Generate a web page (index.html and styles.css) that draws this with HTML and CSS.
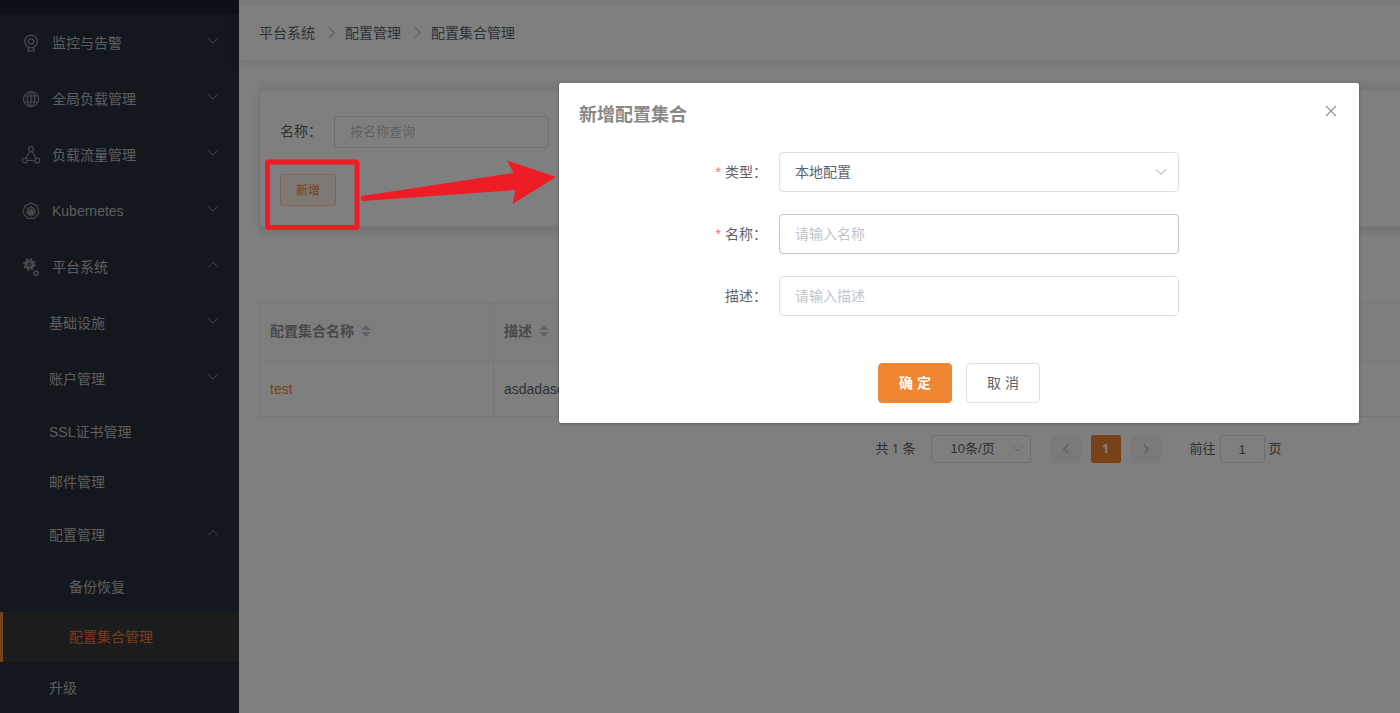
FILE: index.html
```html
<!DOCTYPE html>
<html lang="zh-CN">
<head>
    <meta charset="UTF-8">
    <meta name="viewport" content="width=device-width, initial-scale=1.0">
    <title>配置集合管理</title>
    <link rel="stylesheet" href="styles.css">
</head>
<body>
    <svg class="symbols">
        <symbol id="down" viewBox="0 0 12 12"><path d="M1.5 3.5 6 8l4.500-4.500"/></symbol>
        <symbol id="up" viewBox="0 0 12 12"><path d="M1.500 8 6 3.500 10.500 8"/></symbol>
        <symbol id="right" viewBox="0 0 12 12"><path d="M3.500 1 8.500 6l-5 5"/></symbol>
        <symbol id="left" viewBox="0 0 12 12"><path d="M8.500 1 3.500 6l5 5"/></symbol>
    </svg>
    <div class="layout">
        <aside class="sidebar">
            <div class="logo-bar"></div>
            <ul class="menu">
                <li class="submenu">
                    <svg class="menu-icon" viewBox="0 0 18 18"><circle cx="9" cy="7.500" r="6.300"/><circle cx="9" cy="7.500" r="2.700"/><path d="M6.800 13.500 6 16.500M11.200 13.500l.8 3M5 16.800h8"/></svg>
                    <span>监控与告警</span>
                    <svg class="arrow"><use href="#down"/></svg>
                </li>
                <li class="submenu">
                    <svg class="menu-icon" viewBox="0 0 18 18"><circle cx="9" cy="9" r="7.500"/><ellipse cx="9" cy="9" rx="3.700" ry="7.500"/><path d="M9 1.500v15M2.200 6h13.600M2.200 12h13.600"/></svg>
                    <span>全局负载管理</span>
                    <svg class="arrow"><use href="#down"/></svg>
                </li>
                <li class="submenu">
                    <svg class="menu-icon" viewBox="0 0 18 18"><circle cx="9" cy="3.200" r="2.500"/><circle cx="2.700" cy="14.500" r="2.400"/><circle cx="15.300" cy="14.500" r="2.400"/><path d="M7.900 5.500 3.900 12.300M10.100 5.500l4 6.800M5.200 14.500h7.600"/></svg>
                    <span>负载流量管理</span>
                    <svg class="arrow"><use href="#down"/></svg>
                </li>
                <li class="submenu">
                    <svg class="menu-icon" viewBox="0 0 18 18"><path d="M9 .9l6.300 3 1.700 6.900-4.400 5.600H5.400L1 10.800l1.700-6.900z"/><circle cx="9" cy="9" r="3.500"/><path d="M9 3.500v11M4.700 5.600l8.600 6.800M13.300 5.600l-8.600 6.800M3.600 10.200 9 9l5.400 1.200M6.600 14 9 9l2.400 5"/></svg>
                    <span class="latin">Kubernetes</span>
                    <svg class="arrow"><use href="#down"/></svg>
                </li>
                <li class="submenu">
                    <svg class="menu-icon" viewBox="0 0 18 18"><circle cx="7.400" cy="6.500" r="3.500" stroke-width="2.800"/><circle cx="7.400" cy="6.500" r="5.500" stroke-width="1.800" stroke-dasharray="2.160"/><circle class="dot" cx="7.400" cy="6.500" r=".9"/><circle cx="14" cy="15.200" r="1.900" stroke-width="1.400"/><circle cx="14" cy="15.200" r="2.800" stroke-width="1" stroke-dasharray="1.100"/></svg>
                    <span>平台系统</span>
                    <svg class="arrow"><use href="#up"/></svg>
                </li>
                <li class="submenu level-2"><span>基础设施</span><svg class="arrow"><use href="#down"/></svg></li>
                <li class="submenu level-2"><span>账户管理</span><svg class="arrow"><use href="#down"/></svg></li>
                <li class="menu-item level-2">SSL证书管理</li>
                <li class="menu-item level-2">邮件管理</li>
                <li class="submenu level-2"><span>配置管理</span><svg class="arrow"><use href="#up"/></svg></li>
                <li class="menu-item level-3">备份恢复</li>
                <li class="menu-item level-3 active">配置集合管理</li>
                <li class="menu-item level-2">升级</li>
            </ul>
        </aside>

        <main class="main">
            <nav class="breadcrumb">
                <span>平台系统</span>
                <svg class="separator"><use href="#right"/></svg>
                <span>配置管理</span>
                <svg class="separator"><use href="#right"/></svg>
                <span>配置集合管理</span>
            </nav>
            <section class="search">
                <div class="card">
                    <div class="search-row">
                        <label for="keyword">名称：</label>
                        <input class="input search-input" id="keyword" type="text" placeholder="按名称查询">
                    </div>
                    <button class="add-button" type="button">新增</button>
                </div>
            </section>
            <table class="table">
                <colgroup><col class="col-name"><col></colgroup>
                <thead>
                    <tr>
                        <th>配置集合名称<span class="sort"></span></th>
                        <th>描述<span class="sort"></span></th>
                    </tr>
                </thead>
                <tbody>
                    <tr>
                        <td><a class="link">test</a></td>
                        <td>asdadasd</td>
                    </tr>
                </tbody>
            </table>
            <div class="pagination">
                <span class="total">共 1 条</span>
                <div class="page-size"><span>10条/页</span><svg class="size-arrow"><use href="#down"/></svg></div>
                <button class="page" type="button"><svg><use href="#left"/></svg></button>
                <button class="page current" type="button">1</button>
                <button class="page" type="button"><svg><use href="#right"/></svg></button>
                <div class="jump"><span>前往</span><span class="jump-input">1</span><span>页</span></div>
            </div>
        </main>
    </div>

    <div class="mask">
        <div class="dialog">
            <div class="dialog-header">
                <h2>新增配置集合</h2>
                <svg class="close" viewBox="0 0 12 12"><path d="m1 1 10 10M11 1 1 11"/></svg>
            </div>
            <form class="form">
                <div class="form-item">
                    <label class="required">类型：</label>
                    <div class="input select"><span>本地配置</span><svg><use href="#down"/></svg></div>
                </div>
                <div class="form-item">
                    <label class="required" for="name">名称：</label>
                    <input class="input hovered" id="name" type="text" placeholder="请输入名称">
                </div>
                <div class="form-item">
                    <label for="desc">描述：</label>
                    <input class="input" id="desc" type="text" placeholder="请输入描述">
                </div>
            </form>
            <div class="dialog-footer">
                <button class="button primary" type="button">确 定</button>
                <button class="button" type="button">取 消</button>
            </div>
        </div>
    </div>

    <!-- callout from the add button to the dialog -->
    <svg class="callout" viewBox="0 0 300 80">
        <rect x="7.500" y="7" width="89.500" height="65.500" rx="1"/>
        <path d="M101 42.500q0-1.500 1-1.600L253.500 18 247 5.500 296 22l-43.500 27 3-14L103 46q-2 0-2-3.500z"/>
    </svg>
</body>
</html>
```
FILE: styles.css
```css
* {
    box-sizing: border-box;
}
html {
    overflow: hidden;
}
body {
    margin: 0;
    height: 713px;
    overflow: hidden;
    position: relative;
    font-family: "Liberation Sans", "Noto Sans CJK SC", sans-serif;
    font-size: 14px;
    color: #606266;
    background-color: #ffffff;
}
svg {
    fill: none;
    stroke: currentColor;
}
button, input {
    font-family: inherit;
}
.symbols {
    position: absolute;
    width: 0;
    height: 0;
}
.layout {
    display: flex;
    width: 1918px;
    height: 713px;
}

/* sidebar */
.sidebar {
    width: 239px;
    flex-shrink: 0;
    background-color: #26303c;
    color: #bbbbbb;
}
.logo-bar {
    height: 14px;
    background-color: #1b212d;
}
.menu {
    list-style: none;
    margin: 0;
    padding: 0;
}
.submenu {
    display: flex;
    align-items: center;
    height: 56px;
    padding: 0 20px 0 22px;
}
.submenu span {
    padding-bottom: 1px;
}
.submenu .latin {
    padding: 1px 0 0;
}
.menu-icon {
    width: 18px;
    height: 18px;
    margin: 2px 12px 0 0;
    color: #8c9095;
    stroke-width: 1.200;
    overflow: visible;
}
.dot {
    fill: currentColor;
    stroke: none;
}
.arrow {
    width: 12px;
    height: 12px;
    margin: 0 0 3px auto;
    color: #868a90;
}
.menu-item {
    height: 50px;
    line-height: 50px;
    padding-left: 49px;
}
.submenu.level-2 {
    padding-left: 49px;
}
.menu-item.level-2 {
    padding-top: 1px;
}
.menu-item.level-3 {
    padding-left: 69px;
}
.menu-item.active {
    padding-left: 66px;
    border-left: 3px solid #f08632;
    background-color: #37383a;
    color: #f07a32;
}

/* content */
.main {
    flex: 1;
    border-top: 5px solid #fafafa;
}
.breadcrumb {
    display: flex;
    align-items: center;
    height: 55px;
    padding-left: 20px;
    background-color: #ffffff;
    box-shadow: 0 2px 12px rgba(0, 0, 0, 0.1);
}
.breadcrumb span {
    padding-bottom: 2px;
}
.separator {
    width: 13px;
    height: 13px;
    margin: 0 7px 0 10px;
    color: #b4b8bf;
}
.search {
    margin: 20px 20px 0;
    height: 157px;
    padding: 10px 0;
    background-color: #f6f8fc;
}
.card {
    height: 137px;
    padding: 25px 20px;
    border: 1px solid #ebeef5;
    border-radius: 4px;
    background-color: #ffffff;
    box-shadow: 0 2px 12px rgba(0, 0, 0, 0.1);
}
.search-row {
    display: flex;
    align-items: center;
    height: 32px;
    margin-bottom: 26px;
}
.search-row label {
    width: 54px;
    padding-bottom: 5px;
}
.input {
    width: 400px;
    height: 40px;
    padding: 0 15px;
    border: 1px solid #dcdfe6;
    border-radius: 4px;
    background-color: #ffffff;
    color: #606266;
    font-size: 14px;
}
.input::placeholder {
    color: #c0c4cc;
}
.search-input {
    width: 215px;
    height: 32px;
    padding-bottom: 2px;
    font-size: 13px;
}
.add-button {
    display: block;
    width: 56px;
    height: 32px;
    padding: 0 0 2px;
    border: 1px solid #f9cfad;
    border-radius: 3px;
    background-color: #fef3eb;
    color: #f08632;
    font-size: 12px;
}
.table {
    width: 1639px;
    margin: 65px 20px 0;
    table-layout: fixed;
    border-collapse: collapse;
}
.col-name {
    width: 234px;
}
.table th, .table td {
    height: 55px;
    padding: 0 10px;
    border: 1px solid #ebeef5;
    text-align: left;
}
.table th {
    height: 59px;
    padding-bottom: 4px;
    background-color: #fafafa;
    color: #909399;
}
.link {
    color: #f08632;
}
.sort {
    display: inline-block;
    width: 10px;
    height: 12px;
    margin-left: 7px;
    vertical-align: -1px;
    background-color: #c0c4cc;
    clip-path: polygon(50% 0, 100% 42%, 0 42%, 0 58%, 100% 58%, 50% 100%, 0 58%, 0 42%);
}
.pagination {
    display: flex;
    justify-content: center;
    align-items: center;
    margin-top: 18px;
    height: 28px;
    font-size: 13px;
}
.total {
    padding-bottom: 2px;
    font-family: "Open Sans", "Noto Sans CJK SC", sans-serif;
    line-height: 18px;
}
.page-size {
    display: flex;
    align-items: center;
    justify-content: space-between;
    width: 100px;
    height: 28px;
    margin: 0 20px 0 15px;
    padding: 0 6px 0 19px;
    border: 1px solid #dcdfe6;
    border-radius: 3px;
}
.page-size span {
    padding-bottom: 4px;
}
.size-arrow {
    width: 12px;
    height: 12px;
    color: #c0c4cc;
}
.page {
    width: 30px;
    height: 28px;
    margin-right: 10px;
    padding: 0;
    border: none;
    border-radius: 2px;
    background-color: #f4f4f5;
    color: #c0c4cc;
    font-size: 13px;
}
.page svg {
    display: block;
    width: 10px;
    height: 10px;
    margin: auto;
    stroke-width: 2;
}
.page.current {
    padding-bottom: 2px;
    background-color: #f08632;
    color: #ffffff;
    font-family: "Open Sans", "Noto Sans CJK SC", sans-serif;
    font-weight: bold;
    line-height: 18px;
}
.jump {
    display: flex;
    align-items: center;
    margin-left: 19px;
}
.jump span {
    padding-bottom: 3px;
}
.jump .jump-input {
    width: 45px;
    height: 28px;
    line-height: 26px;
    margin: 0 4px;
    padding-top: 1px;
    border: 1px solid #dcdfe6;
    border-radius: 3px;
    text-align: center;
}

/* dialog */
.mask {
    position: absolute;
    top: 0;
    left: 0;
    width: 1918px;
    height: 713px;
    padding-top: 83px;
    background-color: rgba(0, 0, 0, 0.5);
}
.dialog {
    width: 800px;
    height: 340px;
    margin: 0 auto;
    border-radius: 2px;
    background-color: #ffffff;
    box-shadow: 0 1px 3px rgba(0, 0, 0, 0.3);
}
.dialog-header {
    display: flex;
    justify-content: space-between;
    height: 69px;
    padding: 20px 22px 0 20px;
}
.dialog-header h2 {
    margin: 0;
    line-height: 24px;
    font-size: 18px;
    color: #888888;
}
.close {
    width: 12px;
    height: 12px;
    margin-top: 2px;
    color: #909399;
    stroke-width: 1.100;
}
.form-item {
    display: flex;
    align-items: center;
    margin-bottom: 22px;
}
.form-item label {
    width: 220px;
    padding: 0 12px 2px 0;
    text-align: right;
}
.required::before {
    content: "*";
    margin-right: 4px;
    color: #f56c6c;
}
.select {
    display: flex;
    align-items: center;
    justify-content: space-between;
    padding-right: 10px;
}
.select span {
    padding-bottom: 2px;
}
.select svg {
    width: 14px;
    height: 14px;
    color: #c0c4cc;
}
.hovered {
    border-color: #c0c4cc;
}
.dialog-footer {
    display: flex;
    justify-content: center;
    gap: 14px;
    padding-top: 25px;
}
.button {
    width: 74px;
    height: 40px;
    padding: 0 0 2px;
    border: 1px solid #dcdfe6;
    border-radius: 4px;
    background-color: #ffffff;
    color: #606266;
    font-size: 14px;
}
.button.primary {
    border-color: #f08632;
    background-color: #f08632;
    color: #ffffff;
    font-weight: bold;
}

.callout {
    position: absolute;
    left: 260px;
    top: 155px;
    width: 300px;
    height: 80px;
}
.callout rect {
    stroke: #ee1c24;
    stroke-width: 5;
}
.callout path {
    fill: #ee1c24;
    stroke: none;
}
```
